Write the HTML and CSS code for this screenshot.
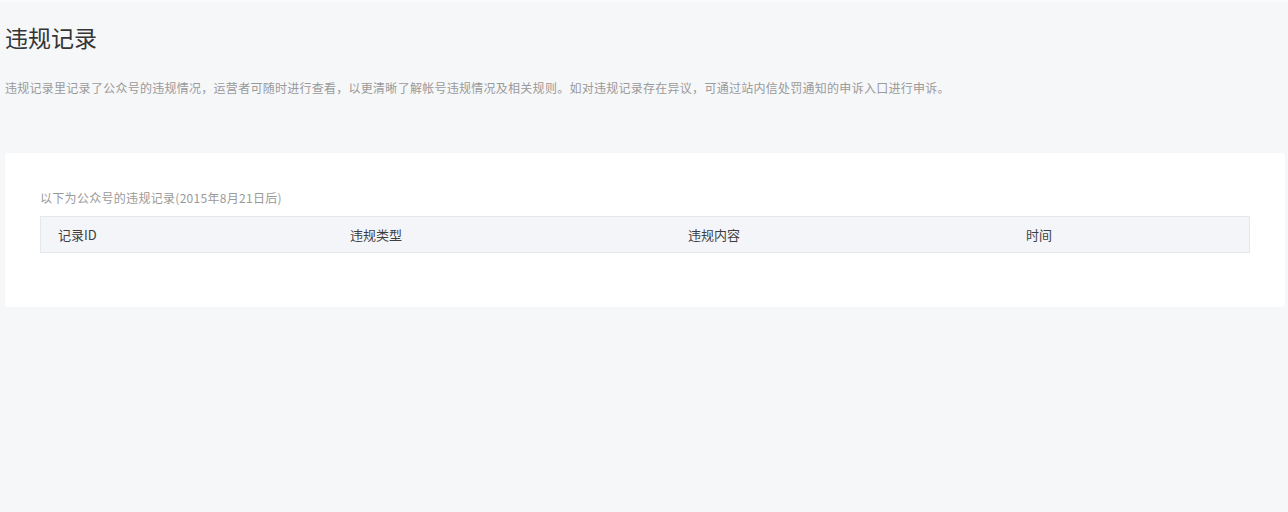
FILE: index.html
```html
<!DOCTYPE html>
<html lang="zh-CN">
<head>
<meta charset="utf-8">
<title>违规记录</title>
<link rel="stylesheet" href="styles.css">
</head>
<body>
<div class="topline"></div>
<main class="page">
  <h1 class="title">违规记录</h1>
  <p class="desc">违规记录里记录了公众号的违规情况，运营者可随时进行查看，以更清晰了解帐号违规情况及相关规则。如对违规记录存在异议，可通过站内信处罚通知的申诉入口进行申诉。</p>
  <section class="card">
    <div class="subtitle">以下为公众号的违规记录(2015年8月21日后)</div>
    <div class="thead">
      <div class="th c1">记录ID</div>
      <div class="th c2">违规类型</div>
      <div class="th c3">违规内容</div>
      <div class="th c4">时间</div>
    </div>
  </section>
</main>
</body>
</html>
```
FILE: styles.css
```css
html, body {
  margin: 0;
  padding: 0;
  background: #f6f7f9;
  font-family: "Noto Sans CJK SC", "Noto Sans", sans-serif;
}
.topline {
  height: 3px;
  background: #f9fafb;
}
.page {
  padding: 19px 3px 0 5px;
}
.title {
  margin: 0;
  font-size: 23px;
  font-weight: 400;
  line-height: 30px;
  color: #353535;
}
.desc {
  margin: 27px 0 0;
  font-size: 12px;
  line-height: 18px;
  color: #9a9a9a;
  letter-spacing: 0.27px;
}
.card {
  margin-top: 56px;
  background: #fff;
  border-radius: 3px;
  padding: 36px 35px 54px;
  box-shadow: 0 0 1px rgba(0,0,0,0.04);
}
.subtitle {
  font-size: 12px;
  line-height: 18px;
  color: #9a9a9a;
  margin-bottom: 9px;
  letter-spacing: 0.3px;
}
.thead {
  display: flex;
  height: 35px;
  align-items: center;
  background: #f4f5f9;
  border: 1px solid #e4e8eb;
  font-size: 13px;
  color: #3e3e3e;
}
.th {
  padding-left: 17px;
  box-sizing: border-box;
}
.c1 { width: 292px; }
.c2 { width: 338px; }
.c3 { width: 338px; }
.c4 { flex: 1; }
```
